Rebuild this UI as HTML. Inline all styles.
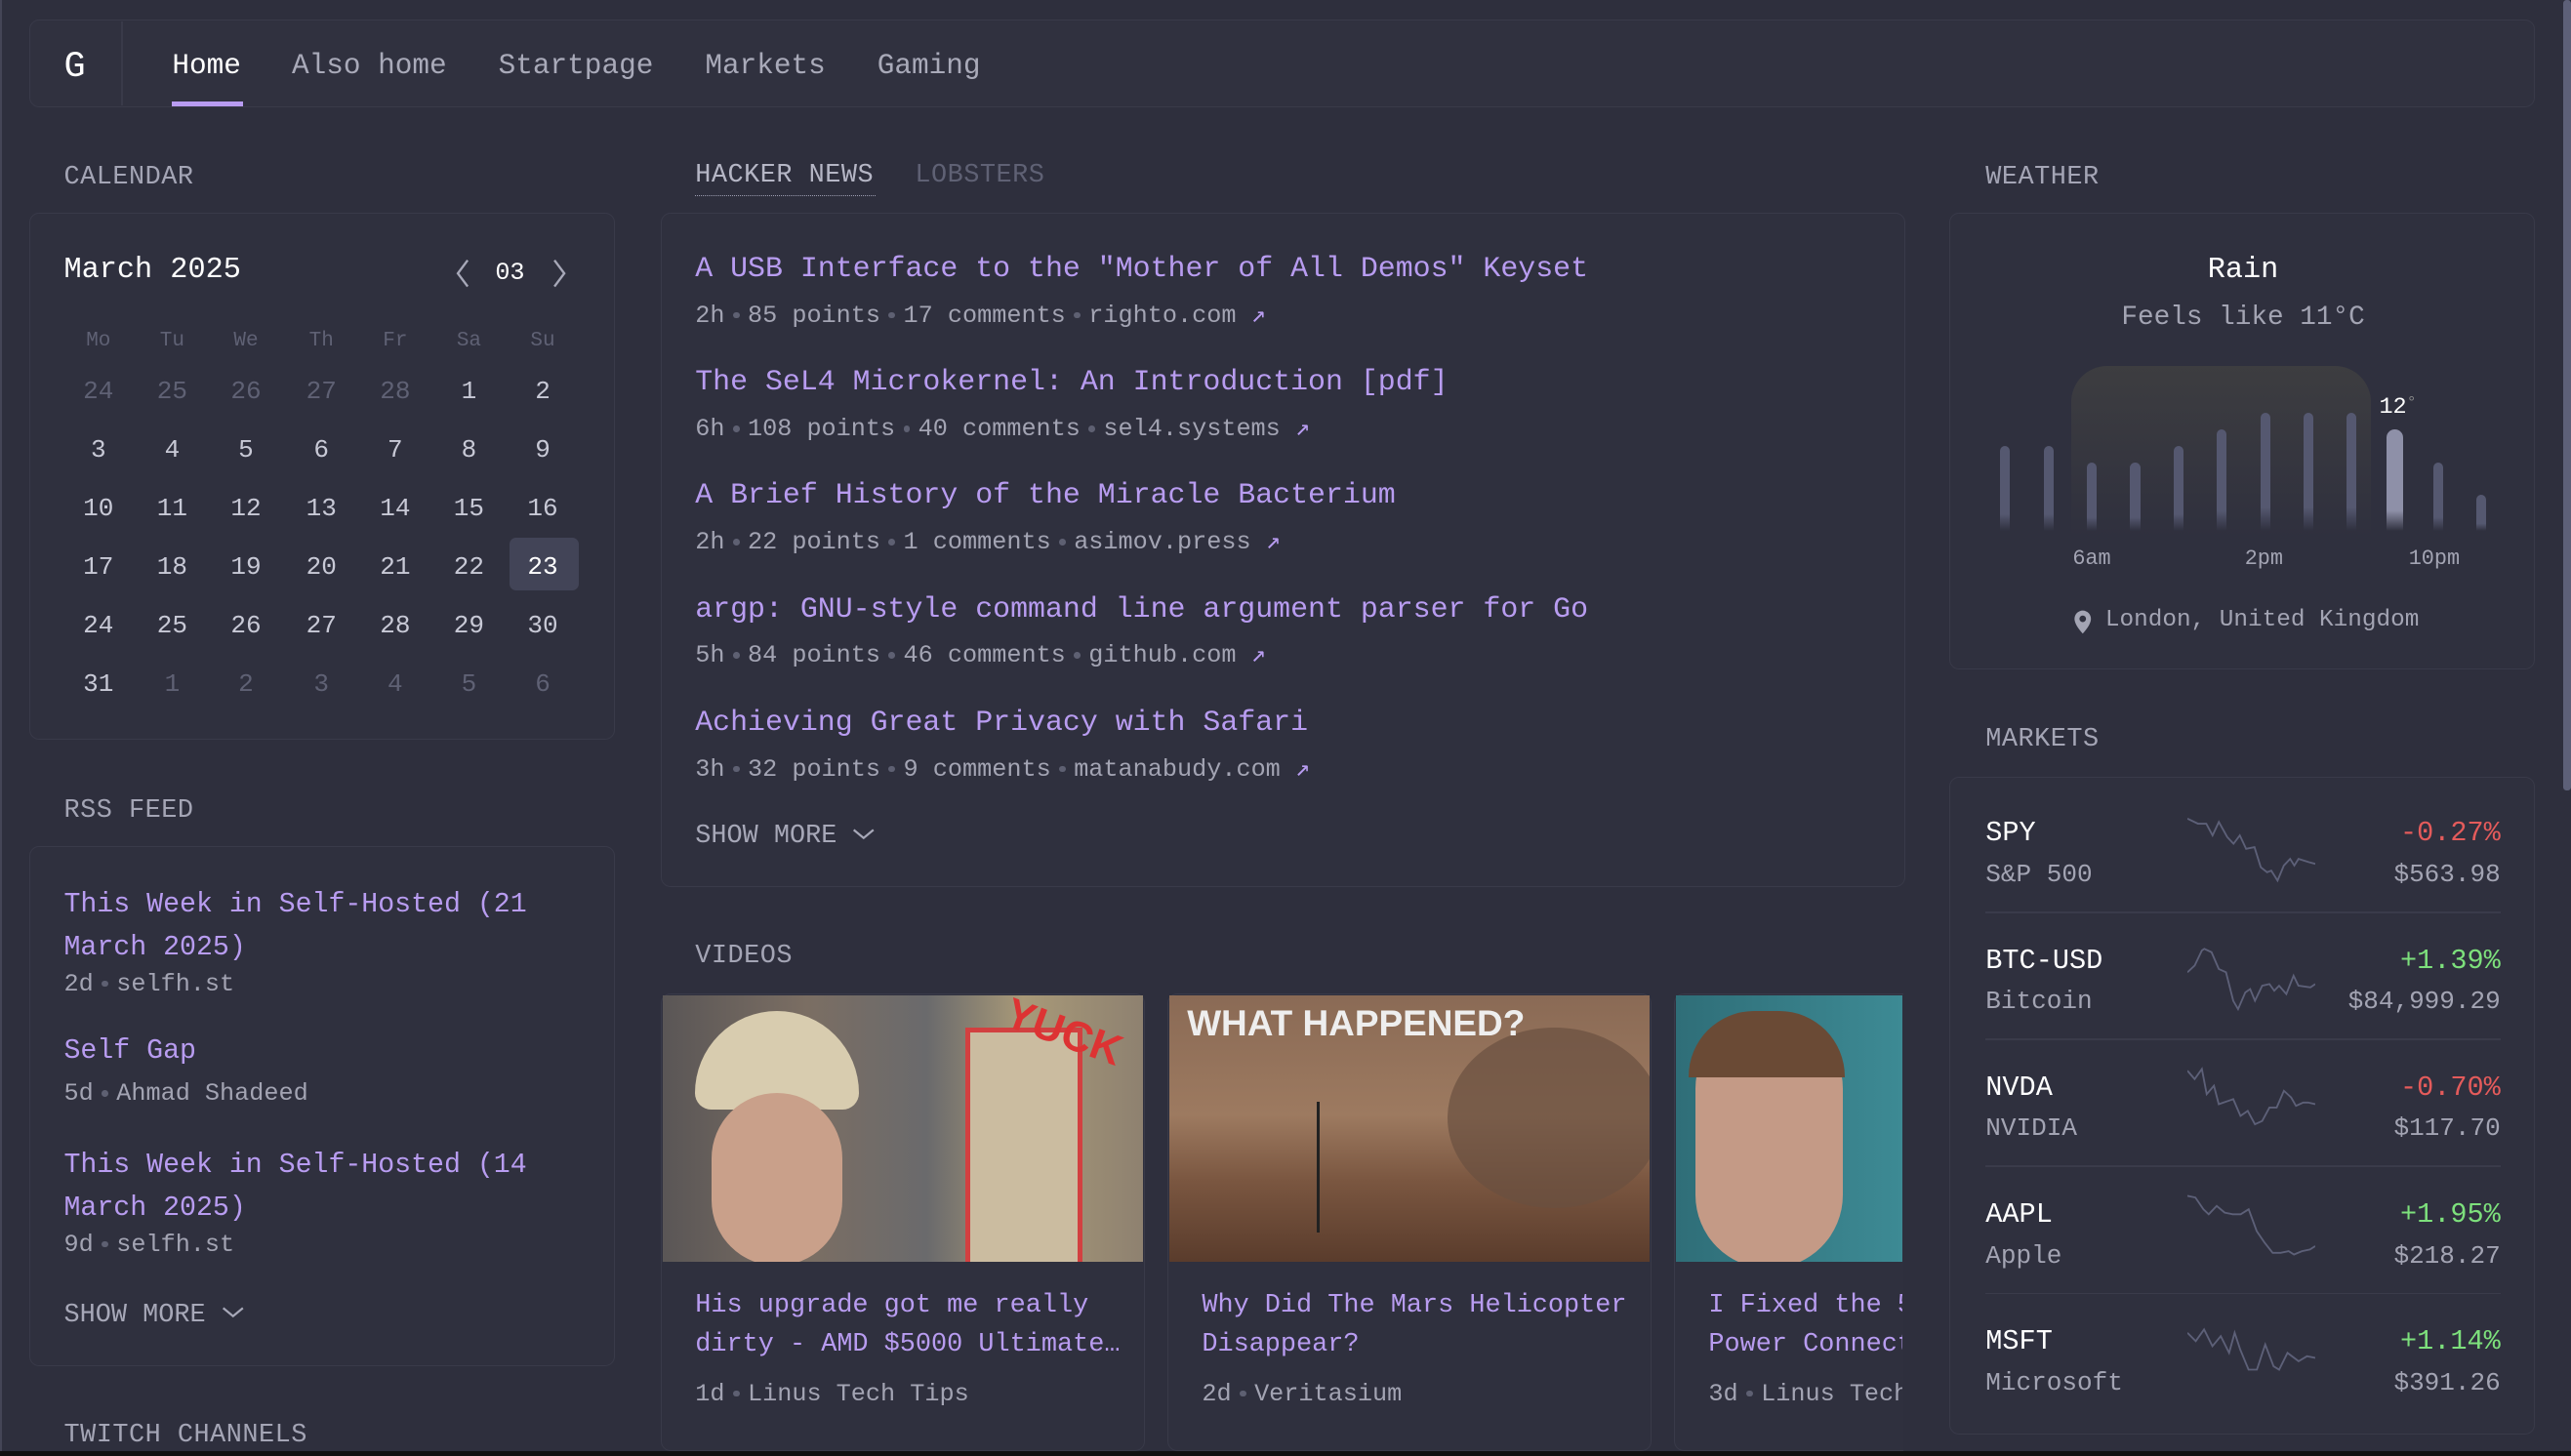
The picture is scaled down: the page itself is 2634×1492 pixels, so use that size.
<!DOCTYPE html>
<html><head><meta charset="utf-8"><style>
html,body{margin:0;padding:0;background:#2e2f3d;overflow:hidden}
#w{zoom:1.67985;width:1568px;height:888px;position:relative;font-family:"Liberation Mono",monospace;color:#a7a8b8;background:#2e2f3d}
.a{position:absolute;white-space:nowrap;margin-top:2.5px}
.n{margin-top:0}
.box{position:absolute;border:1px solid #393a49;border-radius:6px;background:#2f303e}
.h{font-size:16px;color:#a4a5b5;letter-spacing:.3px}
.lk{color:#b89cf0;font-size:17.8px}
.mt{font-size:15px;color:#a3a4b3}
.dot{display:inline-block;width:4px;height:4px;border-radius:50%;background:#5e6072;vertical-align:middle;margin:0 5px}
.cal{font-size:15.5px;text-align:center;width:40px}
</style></head><body><div id="w">
<div class="a n" style="left:0;top:0;width:1px;height:888px;background:#444556"></div>
<div class="a n" style="left:1563px;top:0;width:5px;height:482px;background:#5d6078;border-radius:2px"></div>
<div class="a n" style="left:0;top:885px;width:1568px;height:3px;background:#111"></div>

<!-- nav -->
<div class="box" style="left:18px;top:12px;width:1527px;height:52px;background:#30313f"></div>
<div class="a n" style="left:74px;top:13px;width:1px;height:51px;background:#393a49"></div>
<div class="a" style="left:39px;top:26px;font-size:22px;color:#fff">G</div>
<div class="a" style="left:105px;top:28px;font-size:17.5px;color:#fff">Home</div>
<div class="a n" style="left:105px;top:62px;width:43px;height:3px;background:#b99cf2"></div>
<div class="a" style="left:178px;top:28px;font-size:17.5px;color:#a9aab9">Also home</div>
<div class="a" style="left:304px;top:28px;font-size:17.5px;color:#a9aab9">Startpage</div>
<div class="a" style="left:430px;top:28px;font-size:17.5px;color:#a9aab9">Markets</div>
<div class="a" style="left:535px;top:28px;font-size:17.5px;color:#a9aab9">Gaming</div>

<!-- calendar -->
<div class="a h" style="left:39px;top:97px">CALENDAR</div>
<div class="box" style="left:18px;top:130px;width:356px;height:320px"></div>
<div class="a" style="left:39px;top:152px;font-size:18px;color:#fff">March 2025</div>
<svg class="a" style="left:276px;top:155px" width="12" height="18"><path d="M9 1L3 9l6 8" stroke="#a7a8b8" stroke-width="1.4" fill="none"/></svg>
<div class="a" style="left:302px;top:155px;font-size:15px;color:#fff">03</div>
<svg class="a" style="left:335px;top:155px" width="12" height="18"><path d="M3 1l6 8-6 8" stroke="#a7a8b8" stroke-width="1.4" fill="none"/></svg>
<div class="a n" style="left:311px;top:328px;width:42px;height:32px;background:#424457;border-radius:4px"></div>
<div id="cal"></div>

<!-- rss -->
<div class="a h" style="left:39px;top:483px">RSS FEED</div>
<div class="box" style="left:18px;top:516px;width:356px;height:316px"></div>
<div class="a lk" style="left:39px;top:537px;font-size:16.8px;line-height:26px;white-space:normal;width:320px">This Week in Self-Hosted (21 March 2025)</div>
<div class="a mt" style="left:39px;top:589px">2d<span class="dot"></span>selfh.st</div>
<div class="a lk" style="left:39px;top:630px;font-size:16.8px">Self Gap</div>
<div class="a mt" style="left:39px;top:656px">5d<span class="dot"></span>Ahmad Shadeed</div>
<div class="a lk" style="left:39px;top:696px;font-size:16.8px;line-height:26px;white-space:normal;width:320px">This Week in Self-Hosted (14 March 2025)</div>
<div class="a mt" style="left:39px;top:748px">9d<span class="dot"></span>selfh.st</div>
<div class="a" style="left:39px;top:791px;font-size:16px;color:#a7a8b8">SHOW MORE <svg width="14" height="10"><path d="M1 2l6 5 6-5" stroke="#a7a8b8" stroke-width="1.3" fill="none"/></svg></div>
<div class="a h" style="left:39px;top:864px">TWITCH CHANNELS</div>

<!-- hacker news -->
<div class="a h" style="left:424px;top:96px;color:#b5b6c5">HACKER NEWS</div>
<div class="a n" style="left:424px;top:119px;width:110px;border-top:1px dotted #9c9db0"></div>
<div class="a h" style="left:558px;top:96px;color:#5f6174">LOBSTERS</div>
<div class="box" style="left:403px;top:130px;width:758px;height:410px"></div>
<div id="hn"></div>
<div class="a" style="left:424px;top:499px;font-size:16px;color:#a7a8b8">SHOW MORE <svg width="14" height="10"><path d="M1 2l6 5 6-5" stroke="#a7a8b8" stroke-width="1.3" fill="none"/></svg></div>

<!-- videos -->
<div class="a h" style="left:424px;top:572px">VIDEOS</div>
<div class="box" style="left:403px;top:606px;width:294px;height:278px"></div>
<div class="box" style="left:712px;top:606px;width:294px;height:278px"></div>
<div class="box" style="left:1021px;top:606px;width:139px;height:278px;border-right:none;border-radius:6px 0 0 6px"></div>
<div class="a n" style="left:404px;top:607px;width:293px;height:163px;background:linear-gradient(90deg,#5a5656 0%,#7b6e63 30%,#6a6a6c 55%,#a89978 75%,#8e8170 100%);overflow:hidden">
 <div class="a n" style="left:20px;top:10px;width:100px;height:60px;border-radius:50px 50px 10px 10px;background:#d8ccaf"></div>
 <div class="a n" style="left:30px;top:60px;width:80px;height:105px;border-radius:40px;background:#c9a08a"></div>
 <div class="a n" style="left:185px;top:20px;width:65px;height:143px;background:#cbbca0;border:3px solid #d24040"></div>
 <div class="a n" style="left:208px;top:8px;font:bold 26px 'Liberation Sans',sans-serif;color:#d33;transform:rotate(20deg)">YUCK</div>
</div>
<div class="a n" style="left:713px;top:607px;width:293px;height:163px;background:linear-gradient(180deg,#8a6a55 0%,#9d7a60 45%,#7a5640 70%,#5a3c2c 100%);overflow:hidden">
 <div class="a n" style="left:170px;top:20px;width:130px;height:110px;border-radius:50%;background:#6a5040;opacity:.7"></div>
 <div class="a n" style="left:11px;top:5px;font:bold 22px 'Liberation Sans',sans-serif;color:#eee">WHAT HAPPENED?</div>
 <div class="a n" style="left:90px;top:65px;width:2px;height:80px;background:#222"></div>
</div>
<div class="a n" style="left:1022px;top:607px;width:138px;height:163px;background:linear-gradient(90deg,#2f6e78,#3d8a94);overflow:hidden">
 <div class="a n" style="left:12px;top:12px;width:90px;height:155px;border-radius:45px;background:#c49a86"></div>
 <div class="a n" style="left:8px;top:10px;width:95px;height:40px;border-radius:40px 40px 0 0;background:#6a4a35"></div>
</div>
<div class="a lk" style="left:424px;top:782px;font-size:16px;line-height:24px">His upgrade got me really<br>dirty - AMD $5000 Ultimate…</div>
<div class="a mt" style="left:424px;top:839px">1d<span class="dot"></span>Linus Tech Tips</div>
<div class="a lk" style="left:733px;top:782px;font-size:16px;line-height:24px">Why Did The Mars Helicopter<br>Disappear?</div>
<div class="a mt" style="left:733px;top:839px">2d<span class="dot"></span>Veritasium</div>
<div class="a n" style="left:1022px;top:775px;width:138px;height:100px;overflow:hidden">
<div class="a lk" style="left:20px;top:7px;font-size:16px;line-height:24px">I Fixed the 5<br>Power Connect</div>
<div class="a mt" style="left:20px;top:64px">3d<span class="dot"></span>Linus Tech</div></div>

<!-- weather -->
<div class="a h" style="left:1211px;top:97px">WEATHER</div>
<div class="box" style="left:1189px;top:130px;width:356px;height:277px"></div>
<div class="a" style="left:1189px;top:152px;width:358px;text-align:center;font-size:18px;color:#fff">Rain</div>
<div class="a" style="left:1189px;top:182px;width:358px;text-align:center;font-size:16.5px;color:#a3a4b3">Feels like 11°C</div>
<div class="a n" style="left:1263px;top:223px;width:183px;height:105px;border-radius:22px 22px 0 0;background:linear-gradient(180deg,#3d3d40,#2f303e)"></div>
<div id="bars"></div>
<div class="a" style="left:1451px;top:238px;font-size:14px;color:#fff">12<span style="color:#888;font-size:10px;vertical-align:top">°</span></div>
<div class="a mt" style="left:1264px;top:331px;font-size:13px">6am</div>
<div class="a mt" style="left:1369px;top:331px;font-size:13px">2pm</div>
<div class="a mt" style="left:1469px;top:331px;font-size:13px">10pm</div>
<svg class="a" style="left:1263px;top:369px" width="14" height="16"><path d="M7 1a5 5 0 0 0-5 5c0 4 5 9 5 9s5-5 5-9a5 5 0 0 0-5-5z" fill="#a3a4b3"/><circle cx="7" cy="6" r="2" fill="#2f303e"/></svg>
<div class="a mt" style="left:1284px;top:368px;font-size:14.5px">London, United Kingdom</div>

<!-- markets -->
<div class="a h" style="left:1211px;top:440px">MARKETS</div>
<div class="box" style="left:1189px;top:474px;width:356px;height:400px"></div>
<div id="mk"></div>
</div>
<script>
var h='';
var days=[['Mo','Tu','We','Th','Fr','Sa','Su']];
var cx=[60,105,150,196,241,286,331];
var r=['24 25 26 27 28 1 2','3 4 5 6 7 8 9','10 11 12 13 14 15 16','17 18 19 20 21 22 23','24 25 26 27 28 29 30','31 1 2 3 4 5 6'];
for(var i=0;i<7;i++)h+='<div class="a cal" style="left:'+(cx[i]-20)+'px;top:199px;font-size:12.5px;color:#5f6174">'+days[0][i]+'</div>';
r.forEach(function(row,ri){row.split(' ').forEach(function(d,ci){var dim=(ri==0&&ci<5)||(ri==5&&ci>0);var c=dim?'#5f6174':(ri==3&&ci==6?'#fff':'#c8c9d6');h+='<div class="a cal" style="left:'+(cx[ci]-20)+'px;top:'+(227+ri*35.8)+'px;color:'+c+'">'+d+'</div>'})});
document.getElementById('cal').innerHTML=h;
h='';
var hn=[['A USB Interface to the "Mother of All Demos" Keyset','2h','85 points','17 comments','righto.com'],['The SeL4 Microkernel: An Introduction [pdf]','6h','108 points','40 comments','sel4.systems'],['A Brief History of the Miracle Bacterium','2h','22 points','1 comments','asimov.press'],['argp: GNU-style command line argument parser for Go','5h','84 points','46 comments','github.com'],['Achieving Great Privacy with Safari','3h','32 points','9 comments','matanabudy.com']];
hn.forEach(function(x,i){var y=151+i*69.2;h+='<div class="a lk" style="left:424px;top:'+y+'px">'+x[0]+'</div><div class="a mt" style="left:424px;top:'+(y+29)+'px">'+x[1]+'<span class="dot"></span>'+x[2]+'<span class="dot"></span>'+x[3]+'<span class="dot"></span>'+x[4]+' <span style="color:#b89cf0">↗</span></div>'});
document.getElementById('hn').innerHTML=h;
h='';
var bh=[52,52,42,42,52,62,72,72,72,62,42,22];
bh.forEach(function(v,i){var x=1220+i*26.4;var hi=i==9;h+='<div class="a n" style="left:'+(x+(hi?-2:0))+'px;top:'+(324-v)+'px;width:'+(hi?10:6)+'px;height:'+v+'px;border-radius:5px 5px 0 0;background:linear-gradient(180deg,'+(hi?'#8e90a8':'#555870')+' 80%,#2f303e)"></div>'});
document.getElementById('bars').innerHTML=h;
h='';
var mk=[['SPY','S&amp;P 500','-0.27%','$563.98','M0 4L5 7 9 7 12 14 15 6 19 15 22 19 25 14 28 22 32 21 35 33 38 36 40 35 43 41 46 32 49 28 51 32 53 28 58 30 61 31'],['BTC-USD','Bitcoin','+1.39%','$84,999.29','M0 20L3 16 6 7 7 6 10 8 13 18 16 20 19 37 21 42 24 32 26 30 28 37 31 28 34 27 36 31 38 28 41 33 44 22 46 28 51 29 53 27'],['NVDA','NVIDIA','-0.70%','$117.70','M0 3L3 8 6 2 8 17 11 12 13 23 15 22 19 20 22 30 25 27 28 35 31 33 34 25 37 25 40 15 43 19 45 24 48 22 50 22 53 23'],['AAPL','Apple','+1.95%','$218.27','M0 2L3 3 6 10 8 13 11 8 14 12 17 13 20 13 23 10 26 23 29 30 32 36 35 36 38 35 40 37 43 35 46 34 48 32'],['MSFT','Microsoft','+1.14%','$391.26','M0 8L3 13 6 6 9 16 12 10 15 20 17 8 19 18 22 30 25 30 28 15 31 28 33 30 36 20 40 25 43 22 46 23']];
mk.forEach(function(m,i){var y=496+i*77.5;var up=m[2][0]=='+';
h+='<div class="a" style="left:1211px;top:'+y+'px;font-size:17px;color:#fff">'+m[0]+'</div><div class="a mt" style="left:1211px;top:'+(y+26)+'px;font-size:15.5px">'+m[1]+'</div>';
h+='<div class="a" style="left:1300px;top:'+y+'px;width:225px;text-align:right;font-size:17px;color:'+(up?'#7de07c':'#e45b5b')+'">'+m[2]+'</div><div class="a mt" style="left:1300px;top:'+(y+26)+'px;width:225px;text-align:right;font-size:15.5px">'+m[3]+'</div>';
var vw=parseFloat(m[4].trim().split(' ').slice(-2)[0]);
h+='<svg class="a n" style="left:1334px;top:'+(y-1)+'px" width="78" height="46" viewBox="0 0 '+vw+' 45" preserveAspectRatio="none"><path d="'+m[4]+'" stroke="#5d6078" stroke-width="1.1" fill="none" vector-effect="non-scaling-stroke"/></svg>';
if(i<4)h+='<div class="a n" style="left:1211px;top:'+(y+60)+'px;width:314px;height:1px;background:#3a3b4a"></div>';});
document.getElementById('mk').innerHTML=h;
</script>
</body></html>
